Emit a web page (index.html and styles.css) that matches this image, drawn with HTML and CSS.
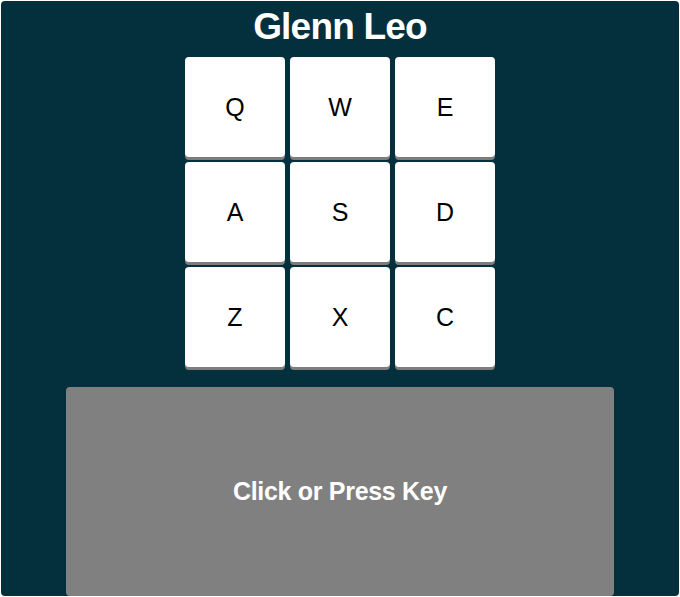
FILE: index.html
```html
<!DOCTYPE html>
<html>
<head>
<meta charset="utf-8">
<link rel="stylesheet" href="styles.css">
</head>
<body>
<div class="app">
  <h1 class="title">Glenn Leo</h1>
  <div class="pad">
    <button class="key">Q</button>
    <button class="key">W</button>
    <button class="key">E</button>
    <button class="key">A</button>
    <button class="key">S</button>
    <button class="key">D</button>
    <button class="key">Z</button>
    <button class="key">X</button>
    <button class="key">C</button>
  </div>
  <div class="display">Click or Press Key</div>
</div>
</body>
</html>
```
FILE: styles.css
```css
html, body {
  margin: 0;
  padding: 0;
  background: #ffffff;
}
body {
  padding: 1px;
  font-family: "Liberation Sans", Arial, sans-serif;
}
.app {
  width: 678px;
  height: 595px;
  background: #04303d;
  border-radius: 4px;
  display: flex;
  flex-direction: column;
  align-items: center;
  overflow: hidden;
}
.title {
  margin: 0;
  height: 54px;
  line-height: 52px;
  font-size: 37px;
  font-weight: bold;
  color: #ffffff;
  letter-spacing: -0.8px;
}
.pad {
  margin-top: 2px;
  display: grid;
  grid-template-columns: repeat(3, 100px);
  grid-auto-rows: 100px;
  gap: 5px;
}
.key {
  margin: 0;
  padding: 0;
  border: none;
  background: #ffffff;
  border-radius: 4px;
  box-shadow: 0 3px 0 0 #7d7d7d;
  font-family: "Liberation Sans", Arial, sans-serif;
  font-size: 25px;
  color: #000000;
  display: flex;
  align-items: center;
  justify-content: center;
}
.display {
  margin-top: 20px;
  width: 548px;
  flex: 1;
  background: #808080;
  border-radius: 4px;
  color: #ffffff;
  font-size: 25px;
  font-weight: bold;
  letter-spacing: -0.3px;
  display: flex;
  align-items: center;
  justify-content: center;
}
```
